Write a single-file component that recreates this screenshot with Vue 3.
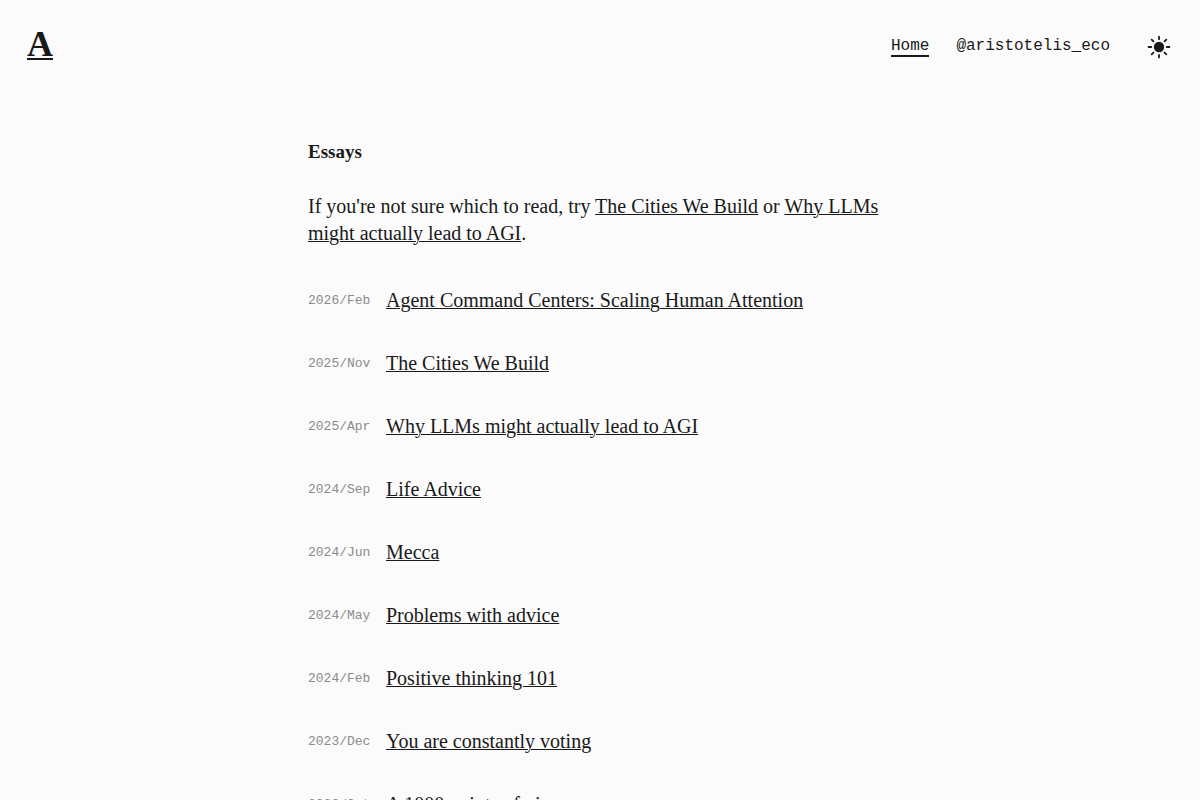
<script setup>
import { ref } from 'vue'

const dark = ref(false)
const essays = [
  { date: '2026/Feb', title: 'Agent Command Centers: Scaling Human Attention' },
  { date: '2025/Nov', title: 'The Cities We Build' },
  { date: '2025/Apr', title: 'Why LLMs might actually lead to AGI' },
  { date: '2024/Sep', title: 'Life Advice' },
  { date: '2024/Jun', title: 'Mecca' },
  { date: '2024/May', title: 'Problems with advice' },
  { date: '2024/Feb', title: 'Positive thinking 101' },
  { date: '2023/Dec', title: 'You are constantly voting' },
  { date: '2023/Oct', title: 'A 1000 points of view' }
]
const rays = [0, 45, 90, 135, 180, 225, 270, 315]
</script>

<template>
  <div class="page" :class="{ dark }">
    <header class="bar">
      <a class="logo" href="#">A</a>
      <nav class="nav">
        <a class="current" href="#">Home</a>
        <a href="#">@aristotelis_eco</a>
        <button type="button" aria-label="Toggle theme" @click="dark = !dark">
          <svg viewBox="0 0 24 24" width="24" height="24" aria-hidden="true">
            <circle cx="12" cy="12" r="5.2" fill="currentColor" />
            <path
              v-for="angle in rays"
              :key="angle"
              d="M12 1.6V4.2"
              :transform="`rotate(${angle} 12 12)`"
              stroke="currentColor"
              stroke-width="1.8"
              stroke-linecap="round"
            />
          </svg>
        </button>
      </nav>
    </header>
    <main class="content">
      <h1>Essays</h1>
      <p>
        If you're not sure which to read, try <a href="#">The Cities We Build</a> or
        <a href="#">Why LLMs might actually lead to AGI</a>.
      </p>
      <ul>
        <li v-for="essay in essays" :key="essay.title">
          <time>{{ essay.date }}</time>
          <a href="#">{{ essay.title }}</a>
        </li>
      </ul>
    </main>
  </div>
</template>

<style>
body {
  background: #fbfbfb;
}
html {
  scrollbar-width: none;
}
</style>

<style scoped>
.page {
  min-height: 100vh;
  overflow: hidden;
  background: #fbfbfb;
  color: #191919;
  font-family: "Liberation Serif", serif;
  font-size: 20px;
  line-height: 27px;
}
.page.dark {
  background: #191919;
  color: #fbfbfb;
}
a {
  color: inherit;
  text-decoration-thickness: 1px;
  text-underline-offset: 1px;
}
.bar {
  display: flex;
  align-items: center;
  justify-content: space-between;
  height: 94px;
  padding: 0 29px 0 27px;
}
.logo {
  padding-bottom: 6px;
  font-size: 36px;
  font-weight: bold;
  line-height: 40px;
  text-decoration-thickness: 2px;
  text-underline-offset: 2px;
}
.nav {
  display: flex;
  align-items: center;
  gap: 27px;
  font-family: "Liberation Mono", monospace;
  font-size: 16px;
  line-height: 20px;
}
.nav a {
  line-height: 18px;
  text-decoration: none;
  border-bottom: 2px solid transparent;
}
.nav a.current {
  border-bottom-color: currentColor;
}
.nav button {
  display: flex;
  margin-left: 10px;
  padding: 0;
  border: 0;
  background: none;
  color: inherit;
  cursor: pointer;
}
.content {
  max-width: 584px;
  margin: 0 auto;
  padding-top: 44px;
}
h1 {
  margin: 0 0 28px;
  font-size: 19px;
  line-height: 27px;
}
p {
  margin: 0 0 40px;
}
ul {
  margin: 0;
  padding: 0;
  list-style: none;
}
li {
  display: flex;
  align-items: center;
  margin-bottom: 36px;
}
time {
  flex: none;
  width: 78px;
  color: #8b8b8b;
  font-family: "Liberation Mono", monospace;
  font-size: 13px;
}
</style>
